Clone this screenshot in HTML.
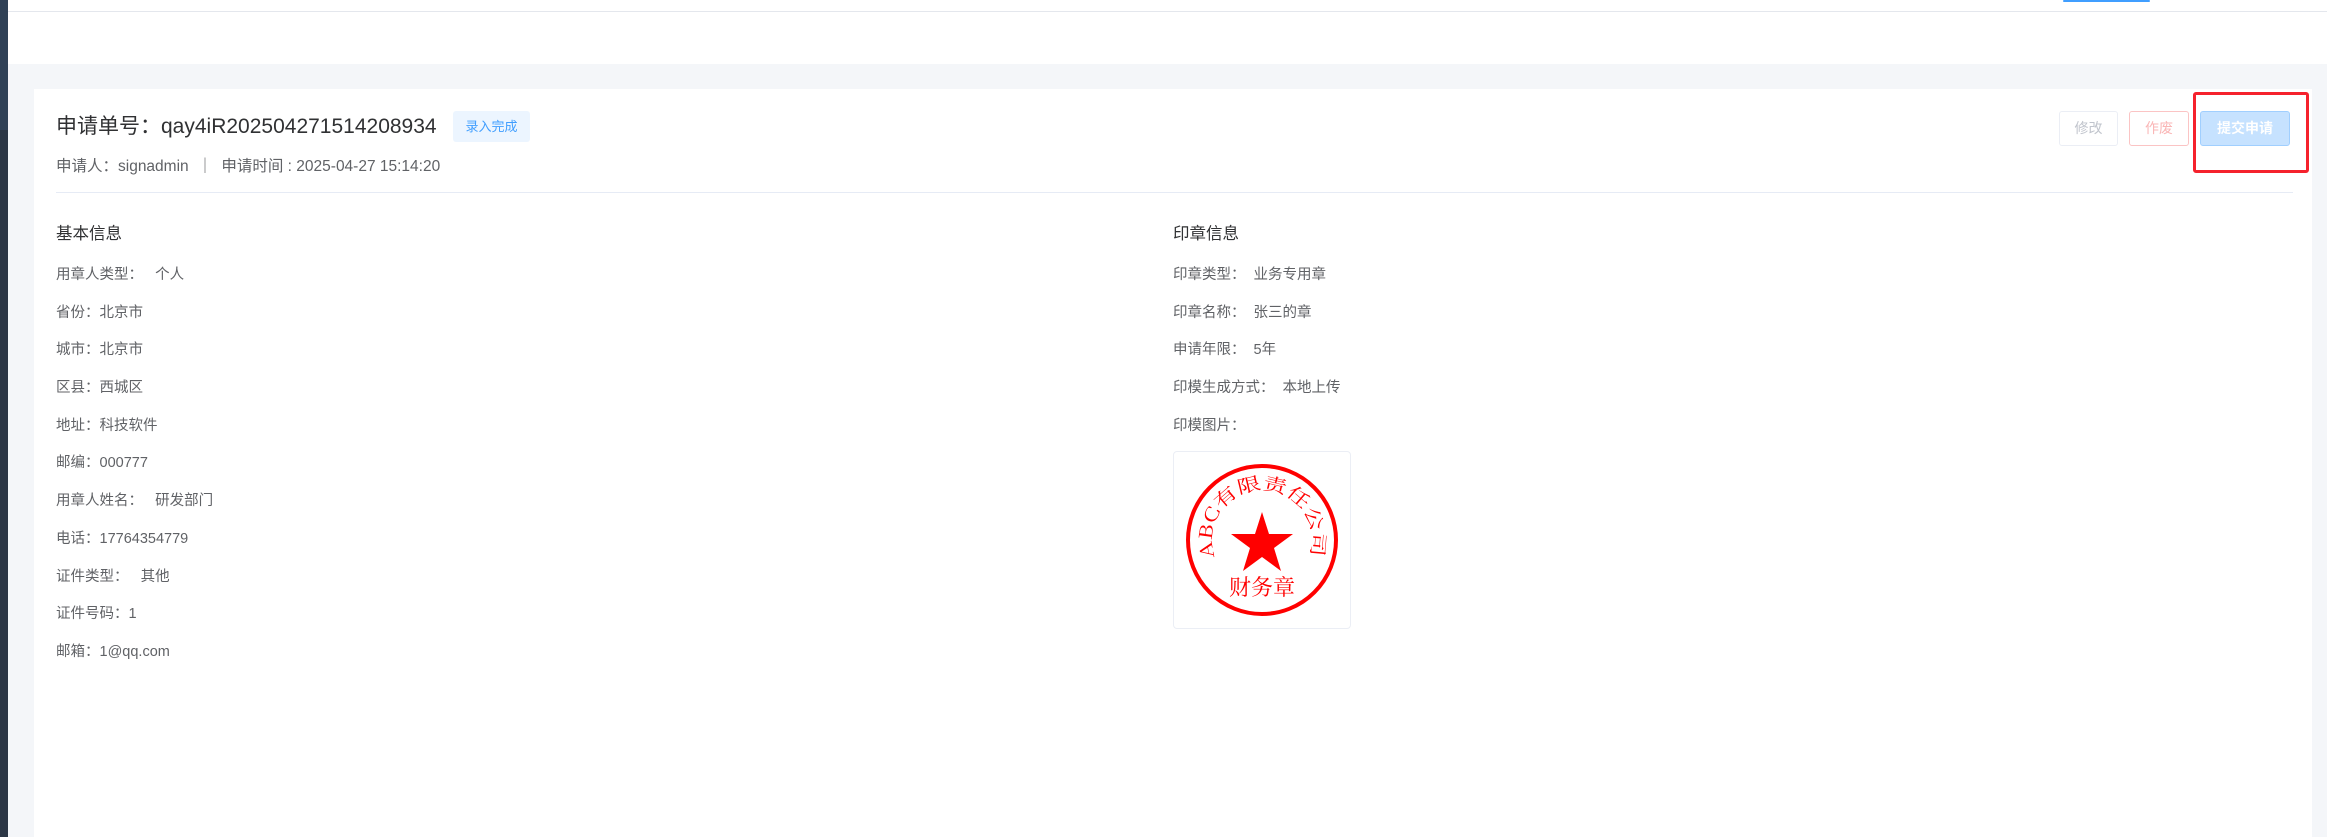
<!DOCTYPE html>
<html><head><meta charset="utf-8"><style>
*{margin:0;padding:0;box-sizing:border-box}
body{width:2327px;height:837px;overflow:hidden;background:#f4f6f9;font-family:"Liberation Sans","Noto Sans CJK SC",sans-serif;position:relative;color:#606266}
.abs{position:absolute;white-space:nowrap}
.f{font-size:14.5px;color:#606266}
</style></head><body>
<div class="abs" style="left:0;top:0;width:8px;height:837px;background:#2b3645"></div>
<div class="abs" style="left:0;top:0;width:8px;height:130px;background:#304156"></div>
<div class="abs" style="left:8px;top:0;width:2319px;height:64px;background:#fff"></div>
<div class="abs" style="left:8px;top:11px;width:2319px;height:1px;background:#e4e7ed"></div>
<div class="abs" style="left:2063px;top:0;width:87px;height:2px;background:#409eff;border-radius:1px"></div>
<div class="abs" style="left:34px;top:89px;width:2278px;height:748px;background:#fff"></div>
<div class="abs" style="left:56px;top:110px;font-size:21px;color:#303133">申请单号：qay4iR202504271514208934</div>
<div class="abs" style="left:453px;top:111px;width:77px;height:31px;background:#ecf5ff;border-radius:3px;color:#409eff;font-size:13px;line-height:31px;text-align:center">录入完成</div>
<div class="abs" style="left:56px;top:154px;font-size:15.5px;color:#606266">申请人：signadmin &nbsp;｜ &nbsp;申请时间 : 2025-04-27 15:14:20</div>
<div class="abs" style="left:56px;top:192px;width:2237px;height:1px;background:#e6ebf5"></div>
<div class="abs" style="left:2059px;top:111px;width:59px;height:35px;border:1px solid #ebeef5;border-radius:3px;color:#c0c4cc;font-size:14px;line-height:33px;text-align:center">修改</div>
<div class="abs" style="left:2129px;top:111px;width:60px;height:35px;border:1px solid #fbc4c4;border-radius:3px;color:#fab6b6;font-size:14px;line-height:33px;text-align:center">作废</div>
<div class="abs" style="left:2200px;top:111px;width:90px;height:35px;border:1px solid #a0cfff;background:#c6e2ff;border-radius:3px;color:#fff;font-size:14px;font-weight:bold;line-height:33px;text-align:center">提交申请</div>
<div class="abs" style="left:2193px;top:92px;width:116px;height:81px;border:3px solid #f5222d;border-radius:3px"></div>

<div class="abs" style="left:56px;top:220px;font-size:16.5px;color:#303133">基本信息</div>
<div class="abs f" style="left:56px;top:263px">用章人类型：&nbsp;&nbsp; 个人</div>
<div class="abs f" style="left:56px;top:301px">省份：北京市</div>
<div class="abs f" style="left:56px;top:338px">城市：北京市</div>
<div class="abs f" style="left:56px;top:376px">区县：西城区</div>
<div class="abs f" style="left:56px;top:414px">地址：科技软件</div>
<div class="abs f" style="left:56px;top:451px">邮编：000777</div>
<div class="abs f" style="left:56px;top:489px">用章人姓名：&nbsp;&nbsp; 研发部门</div>
<div class="abs f" style="left:56px;top:527px">电话：17764354779</div>
<div class="abs f" style="left:56px;top:565px">证件类型：&nbsp;&nbsp; 其他</div>
<div class="abs f" style="left:56px;top:602px">证件号码：1</div>
<div class="abs f" style="left:56px;top:640px">邮箱：1@qq.com</div>

<div class="abs" style="left:1173px;top:220px;font-size:16.5px;color:#303133">印章信息</div>
<div class="abs f" style="left:1173px;top:263px">印章类型：&nbsp; 业务专用章</div>
<div class="abs f" style="left:1173px;top:301px">印章名称：&nbsp; 张三的章</div>
<div class="abs f" style="left:1173px;top:338px">申请年限：&nbsp; 5年</div>
<div class="abs f" style="left:1173px;top:376px">印模生成方式：&nbsp; 本地上传</div>
<div class="abs f" style="left:1173px;top:414px">印模图片：</div>
<div class="abs" style="left:1173px;top:451px;width:178px;height:178px;border:1px solid #ebeef5;border-radius:4px">
<svg width="176" height="176" viewBox="0 0 176 176">
<defs><path id="arc" d="M41,105 A50,50 0 1 1 135,105"/></defs>
<circle cx="88" cy="88" r="74" fill="none" stroke="#f00" stroke-width="4"/>
<text font-family="Noto Serif CJK SC,serif" font-size="18" fill="#f00"><textPath href="#arc" textLength="190" lengthAdjust="spacingAndGlyphs">ABC有限责任公司</textPath></text>
<polygon points="88,60 95,82 119,82 100,96 107,119 88,105 69,119 76,96 57,82 81,82" fill="#f00"/>
<text x="88" y="143" text-anchor="middle" font-family="Noto Serif CJK SC,serif" font-size="22" fill="#f00">财务章</text>
</svg></div>
</body></html>
